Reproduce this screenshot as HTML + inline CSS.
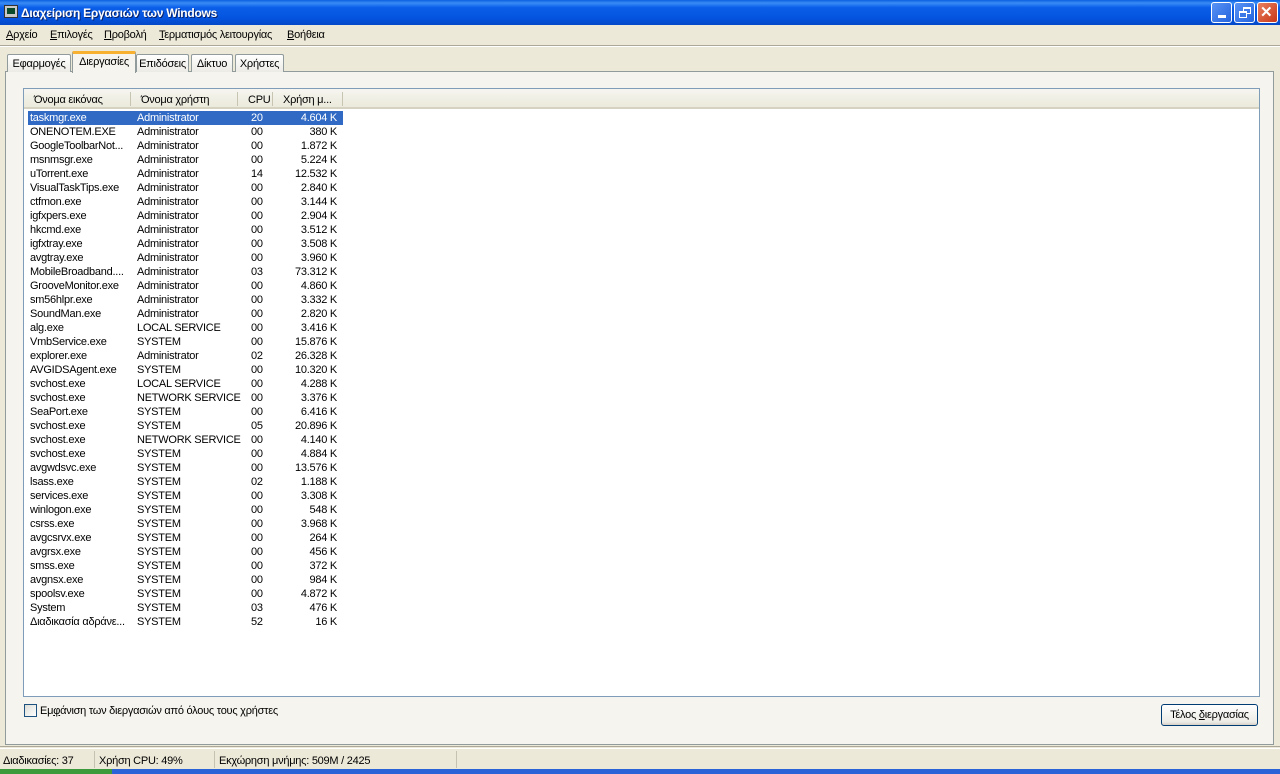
<!DOCTYPE html>
<html><head><meta charset="utf-8"><style>
*{margin:0;padding:0;box-sizing:border-box}
body{width:1280px;height:774px;overflow:hidden;background:#ece9d8;font-family:"Liberation Sans",sans-serif;font-size:11px;letter-spacing:-0.25px;color:#000;position:relative}
.abs{position:absolute}
#title{left:0;top:0;width:1280px;height:25px;background:linear-gradient(#0a5fe0 0%,#3a8df5 12%,#0b5ee8 30%,#0454e0 70%,#0348c8 100%);color:#fff;font-weight:bold;font-size:12px}
#title .t{left:21px;top:6px;text-shadow:1px 1px #0a246a}
.btn{top:2px;width:21px;height:21px;border:1px solid #fff;border-radius:3px;background:linear-gradient(135deg,#5a94f5,#2463de)}
.menu span{position:absolute;top:29px}
#tabs .tab{position:absolute;top:54px;height:18px;border:1px solid #919b9c;border-bottom:none;background:linear-gradient(#fff,#ecebe6);padding:3px 0 0;text-align:center;border-radius:2px 2px 0 0;white-space:nowrap}
#panel{left:5px;top:71px;width:1269px;height:674px;border:1px solid #919b9c;background:#f5f4ee}
#list{left:23px;top:88px;width:1237px;height:609px;border:1px solid #7f9db9;background:#fff}
#hdr{left:0;top:0;width:1235px;height:20px;background:linear-gradient(#f6f5f0,#ebeadb);border-bottom:2px solid #d6d2c2}
#hdr span{position:absolute;top:5px}
.sep{position:absolute;top:3px;width:1px;height:14px;background:#c7c5b2}
.row{position:absolute;left:4px;height:14px;width:315px;line-height:14px;white-space:nowrap}
.row span{position:absolute}
.sel{background:#316ac5;color:#fff}
#status{left:0;top:748px;width:1280px;height:21px;border-top:1px solid #fff}
#status span{position:absolute;top:6px}
</style></head><body>
<div id="title" class="abs">
 <div class="abs" style="left:4px;top:5px;width:14px;height:13px;background:#c8c8c8;border:1px solid #333"><div style="margin:2px;height:6px;background:#0a4a2a"></div></div>
 <span class="abs t">Διαχείριση Εργασιών των Windows</span>
 <div class="abs btn" style="left:1211px"><div class="abs" style="left:6px;top:12px;width:8px;height:3px;background:#fff"></div></div>
 <div class="abs btn" style="left:1234px"><div class="abs" style="left:8px;top:4px;width:8px;height:7px;border:1px solid #fff;border-top-width:2px"></div><div class="abs" style="left:4px;top:8px;width:8px;height:7px;border:1px solid #fff;border-top-width:2px;background:#3a78e8"></div></div>
 <div class="abs btn" style="left:1257px;background:linear-gradient(135deg,#e88060,#c83818)"><div class="abs" style="left:2px;top:2px;color:#fff;font-size:15px;line-height:15px;font-weight:bold">✕</div></div>
</div>
<div class="menu">
 <span style="left:6px"><u>Α</u>ρχείο</span><span style="left:50px"><u>Ε</u>πιλογές</span><span style="left:104px"><u>Π</u>ροβολή</span><span style="left:159px"><u>Τ</u>ερματισμός λειτουργίας</span><span style="left:287px"><u>Β</u>οήθεια</span>
</div>
<div class="abs" style="left:0;top:45px;width:1280px;height:1px;background:#aca899"></div>
<div class="abs" style="left:0;top:46px;width:1280px;height:1px;background:#fff"></div>
<div id="panel" class="abs"></div>
<div id="tabs">
 <div class="tab" style="left:7px;width:64px">Εφαρμογές</div>
 <div class="tab" style="left:72px;top:51px;height:22px;width:64px;background:#f5f4ee;border-top:3px solid #f8b030;z-index:2;padding-top:2px">Διεργασίες</div>
 <div class="tab" style="left:136px;width:53px">Επιδόσεις</div>
 <div class="tab" style="left:191px;width:42px">Δίκτυο</div>
 <div class="tab" style="left:235px;width:49px">Χρήστες</div>
</div>
<div id="list" class="abs">
 <div id="hdr" class="abs">
  <span style="left:10px">Όνομα εικόνας</span><span style="left:117px">Όνομα χρήστη</span><span style="left:224px">CPU</span><span style="left:259px">Χρήση μ...</span>
  <div class="sep" style="left:106px"></div><div class="sep" style="left:213px"></div><div class="sep" style="left:248px"></div><div class="sep" style="left:318px"></div>
 </div>
 <div id="rows"></div>
</div>
<div class="abs" style="left:24px;top:704px;width:13px;height:13px;border:1px solid #1c5180;background:linear-gradient(135deg,#dcdcd7,#fff)"></div>
<span class="abs" style="left:40px;top:705px">Εμ<u>φ</u>άνιση των διεργασιών από όλους τους χρήστες</span>
<div class="abs" style="left:1161px;top:704px;width:97px;height:22px;border:1px solid #003c74;border-radius:3px;background:linear-gradient(#fff,#ecebe6 85%,#d6d0c5);text-align:center;line-height:20px">Τέλος <u>δ</u>ιεργασίας</div>
<div class="abs" style="left:0;top:746px;width:1280px;height:1px;background:#aca899"></div>
<div id="status" class="abs">
 <span style="left:3px">Διαδικασίες: 37</span><span style="left:99px">Χρήση CPU: 49%</span><span style="left:219px">Εκχώρηση μνήμης: 509M / 2425</span>
 <div class="abs" style="left:94px;top:2px;width:1px;height:17px;background:#c5c2b2"></div>
 <div class="abs" style="left:214px;top:2px;width:1px;height:17px;background:#c5c2b2"></div>
 <div class="abs" style="left:456px;top:2px;width:1px;height:17px;background:#c5c2b2"></div>
</div>
<div class="abs" style="left:0;top:769px;width:1280px;height:5px;background:#2a62d8"></div>
<div class="abs" style="left:0;top:769px;width:112px;height:5px;background:#3c9a3c"></div>
<script>
var d=[["taskmgr.exe","Administrator","20","4.604 K"],["ONENOTEM.EXE","Administrator","00","380 K"],["GoogleToolbarNot...","Administrator","00","1.872 K"],["msnmsgr.exe","Administrator","00","5.224 K"],["uTorrent.exe","Administrator","14","12.532 K"],["VisualTaskTips.exe","Administrator","00","2.840 K"],["ctfmon.exe","Administrator","00","3.144 K"],["igfxpers.exe","Administrator","00","2.904 K"],["hkcmd.exe","Administrator","00","3.512 K"],["igfxtray.exe","Administrator","00","3.508 K"],["avgtray.exe","Administrator","00","3.960 K"],["MobileBroadband....","Administrator","03","73.312 K"],["GrooveMonitor.exe","Administrator","00","4.860 K"],["sm56hlpr.exe","Administrator","00","3.332 K"],["SoundMan.exe","Administrator","00","2.820 K"],["alg.exe","LOCAL SERVICE","00","3.416 K"],["VmbService.exe","SYSTEM","00","15.876 K"],["explorer.exe","Administrator","02","26.328 K"],["AVGIDSAgent.exe","SYSTEM","00","10.320 K"],["svchost.exe","LOCAL SERVICE","00","4.288 K"],["svchost.exe","NETWORK SERVICE","00","3.376 K"],["SeaPort.exe","SYSTEM","00","6.416 K"],["svchost.exe","SYSTEM","05","20.896 K"],["svchost.exe","NETWORK SERVICE","00","4.140 K"],["svchost.exe","SYSTEM","00","4.884 K"],["avgwdsvc.exe","SYSTEM","00","13.576 K"],["lsass.exe","SYSTEM","02","1.188 K"],["services.exe","SYSTEM","00","3.308 K"],["winlogon.exe","SYSTEM","00","548 K"],["csrss.exe","SYSTEM","00","3.968 K"],["avgcsrvx.exe","SYSTEM","00","264 K"],["avgrsx.exe","SYSTEM","00","456 K"],["smss.exe","SYSTEM","00","372 K"],["avgnsx.exe","SYSTEM","00","984 K"],["spoolsv.exe","SYSTEM","00","4.872 K"],["System","SYSTEM","03","476 K"],["Διαδικασία αδράνε...","SYSTEM","52","16 K"]];
var h="";d.forEach(function(r,i){h+='<div class="row'+(i==0?' sel':'')+'" style="top:'+(22+i*14)+'px"><span style="left:2px">'+r[0]+'</span><span style="left:109px">'+r[1]+'</span><span style="left:223px">'+r[2]+'</span><span style="right:6px">'+r[3]+'</span></div>'});
document.getElementById("rows").innerHTML=h;
</script>
</body></html>
